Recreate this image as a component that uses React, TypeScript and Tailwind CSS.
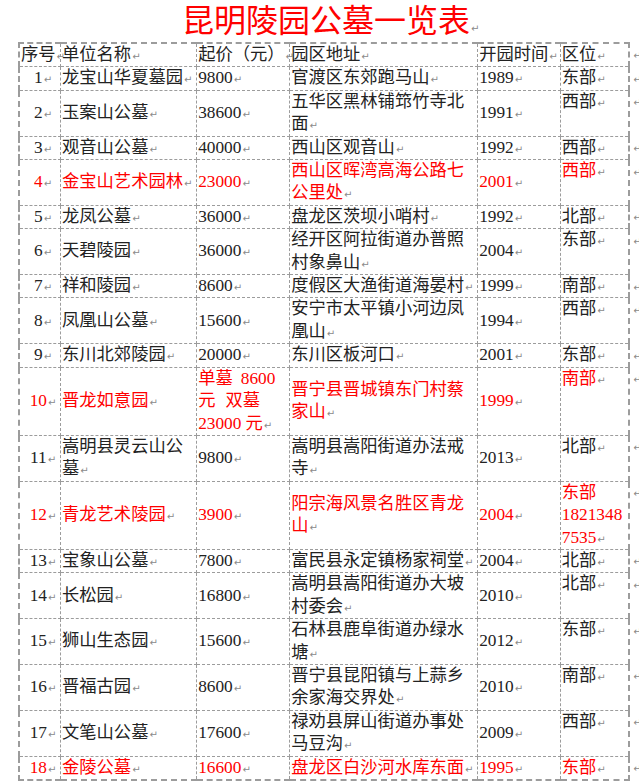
import { Fragment, ReactNode } from "react";

type Row = {
  n: string;
  name: string[];
  price: ReactNode[];
  addr: string[];
  year: string;
  area: string[];
  red?: boolean;
};

const rows: Row[] = [
  { n: "1", name: ["龙宝山华夏墓园"], price: ["9800"], addr: ["官渡区东郊跑马山"], year: "1989", area: ["东部"] },
  { n: "2", name: ["玉案山公墓"], price: ["38600"], addr: ["五华区黑林铺筇竹寺北", "面"], year: "1991", area: ["西部"] },
  { n: "3", name: ["观音山公墓"], price: ["40000"], addr: ["西山区观音山"], year: "1992", area: ["西部"] },
  { n: "4", name: ["金宝山艺术园林"], price: ["23000"], addr: ["西山区晖湾高海公路七", "公里处"], year: "2001", area: ["西部"], red: true },
  { n: "5", name: ["龙凤公墓"], price: ["36000"], addr: ["盘龙区茨坝小哨村"], year: "1992", area: ["北部"] },
  { n: "6", name: ["天碧陵园"], price: ["36000"], addr: ["经开区阿拉街道办普照", "村象鼻山"], year: "2004", area: ["东部"] },
  { n: "7", name: ["祥和陵园"], price: ["8600"], addr: ["度假区大渔街道海晏村"], year: "1999", area: ["南部"] },
  { n: "8", name: ["凤凰山公墓"], price: ["15600"], addr: ["安宁市太平镇小河边凤", "凰山"], year: "1994", area: ["西部"] },
  { n: "9", name: ["东川北郊陵园"], price: ["20000"], addr: ["东川区板河口"], year: "2001", area: ["东部"] },
  {
    n: "10",
    name: ["晋龙如意园"],
    price: [
      <>单墓<span className="inline-block w-[8px]" />8600</>,
      <>元<span className="inline-block w-[10px]" />双墓</>,
      <>23000<span className="inline-block w-[4px]" />元</>,
    ],
    addr: ["晋宁县晋城镇东门村蔡", "家山"],
    year: "1999",
    area: ["南部"],
    red: true,
  },
  { n: "11", name: ["嵩明县灵云山公", "墓"], price: ["9800"], addr: ["嵩明县嵩阳街道办法戒", "寺"], year: "2013", area: ["北部"] },
  { n: "12", name: ["青龙艺术陵园"], price: ["3900"], addr: ["阳宗海风景名胜区青龙", "山"], year: "2004", area: ["东部", "1821348", "7535"], red: true },
  { n: "13", name: ["宝象山公墓"], price: ["7800"], addr: ["富民县永定镇杨家祠堂"], year: "2004", area: ["北部"] },
  { n: "14", name: ["长松园"], price: ["16800"], addr: ["嵩明县嵩阳街道办大坡", "村委会"], year: "2010", area: ["北部"] },
  { n: "15", name: ["狮山生态园"], price: ["15600"], addr: ["石林县鹿阜街道办绿水", "塘"], year: "2012", area: ["东部"] },
  { n: "16", name: ["晋福古园"], price: ["8600"], addr: ["晋宁县昆阳镇与上蒜乡", "余家海交界处"], year: "2010", area: ["南部"] },
  { n: "17", name: ["文笔山公墓"], price: ["17600"], addr: ["禄劝县屏山街道办事处", "马豆沟"], year: "2009", area: ["西部"] },
  { n: "18", name: ["金陵公墓"], price: ["16600"], addr: ["盘龙区白沙河水库东面"], year: "1995", area: ["东部"], red: true },
];

const headers = ["序号", "单位名称", "起价（元）", "园区地址", "开园时间", "区位"];

function Mark() {
  return <span className="font-['DejaVu_Sans',sans-serif] text-[10px] leading-none text-[#8a8a8a] ml-[1px]">↵</span>;
}

function Lines({ lines }: { lines: ReactNode[] }) {
  return (
    <>
      {lines.map((l, i) => (
        <Fragment key={i}>
          {l}
          {i < lines.length - 1 ? <br /> : <Mark />}
        </Fragment>
      ))}
    </>
  );
}

const cell = "border border-dashed border-[#9c9c9c] p-0 pl-[1px] align-middle whitespace-nowrap overflow-visible";

export default function App() {
  return (
    <div className="min-h-[784px] bg-white font-['Liberation_Serif','Noto_Sans_CJK_SC',serif] text-[#222]">
      <div className="h-[42px] pl-[182px] text-[32px] leading-[42px] text-[#ff0000] whitespace-nowrap">
        昆明陵园公墓一览表
        <Mark />
      </div>
      <div className="pl-[18px]">
        <table className="w-[621px] table-fixed border-collapse text-[17.3px] leading-[22.4px]">
          <colgroup>
            <col className="w-[41.5px]" />
            <col className="w-[136.2px]" />
            <col className="w-[93px]" />
            <col className="w-[188px]" />
            <col className="w-[82.6px]" />
            <col className="w-[69px]" />
            <col className="w-[10.7px]" />
          </colgroup>
          <tbody>
            <tr>
              {headers.map((h, i) => (
                <td
                  key={h}
                  className={`${cell} border-t-2 !align-top ${i === 0 ? "border-l-2" : ""} ${i === 5 ? "border-r-2" : ""}`}
                >
                  {h}
                  <Mark />
                </td>
              ))}
              <td className="p-0 pl-[2px] align-top">
                <Mark />
              </td>
            </tr>
            {rows.map((r, idx) => {
              const last = idx === rows.length - 1;
              const b = last ? "border-b-2" : "";
              return (
                <tr key={r.n} className={r.red ? "text-[#ff0000]" : ""}>
                  <td className={`${cell} ${b} border-l-2 text-center pl-[6px]`}>
                    {r.n}
                    <Mark />
                  </td>
                  <td className={`${cell} ${b}`}>
                    <Lines lines={r.name} />
                  </td>
                  <td className={`${cell} ${b}`}>
                    <Lines lines={r.price} />
                  </td>
                  <td className={`${cell} ${b}`}>
                    <Lines lines={r.addr} />
                  </td>
                  <td className={`${cell} ${b}`}>
                    {r.year}
                    <Mark />
                  </td>
                  <td className={`${cell} ${b} border-r-2 !align-top`}>
                    <Lines lines={r.area} />
                  </td>
                  <td className="p-0 pl-[2px] align-top">
                    <Mark />
                  </td>
                </tr>
              );
            })}
          </tbody>
        </table>
      </div>
    </div>
  );
}
